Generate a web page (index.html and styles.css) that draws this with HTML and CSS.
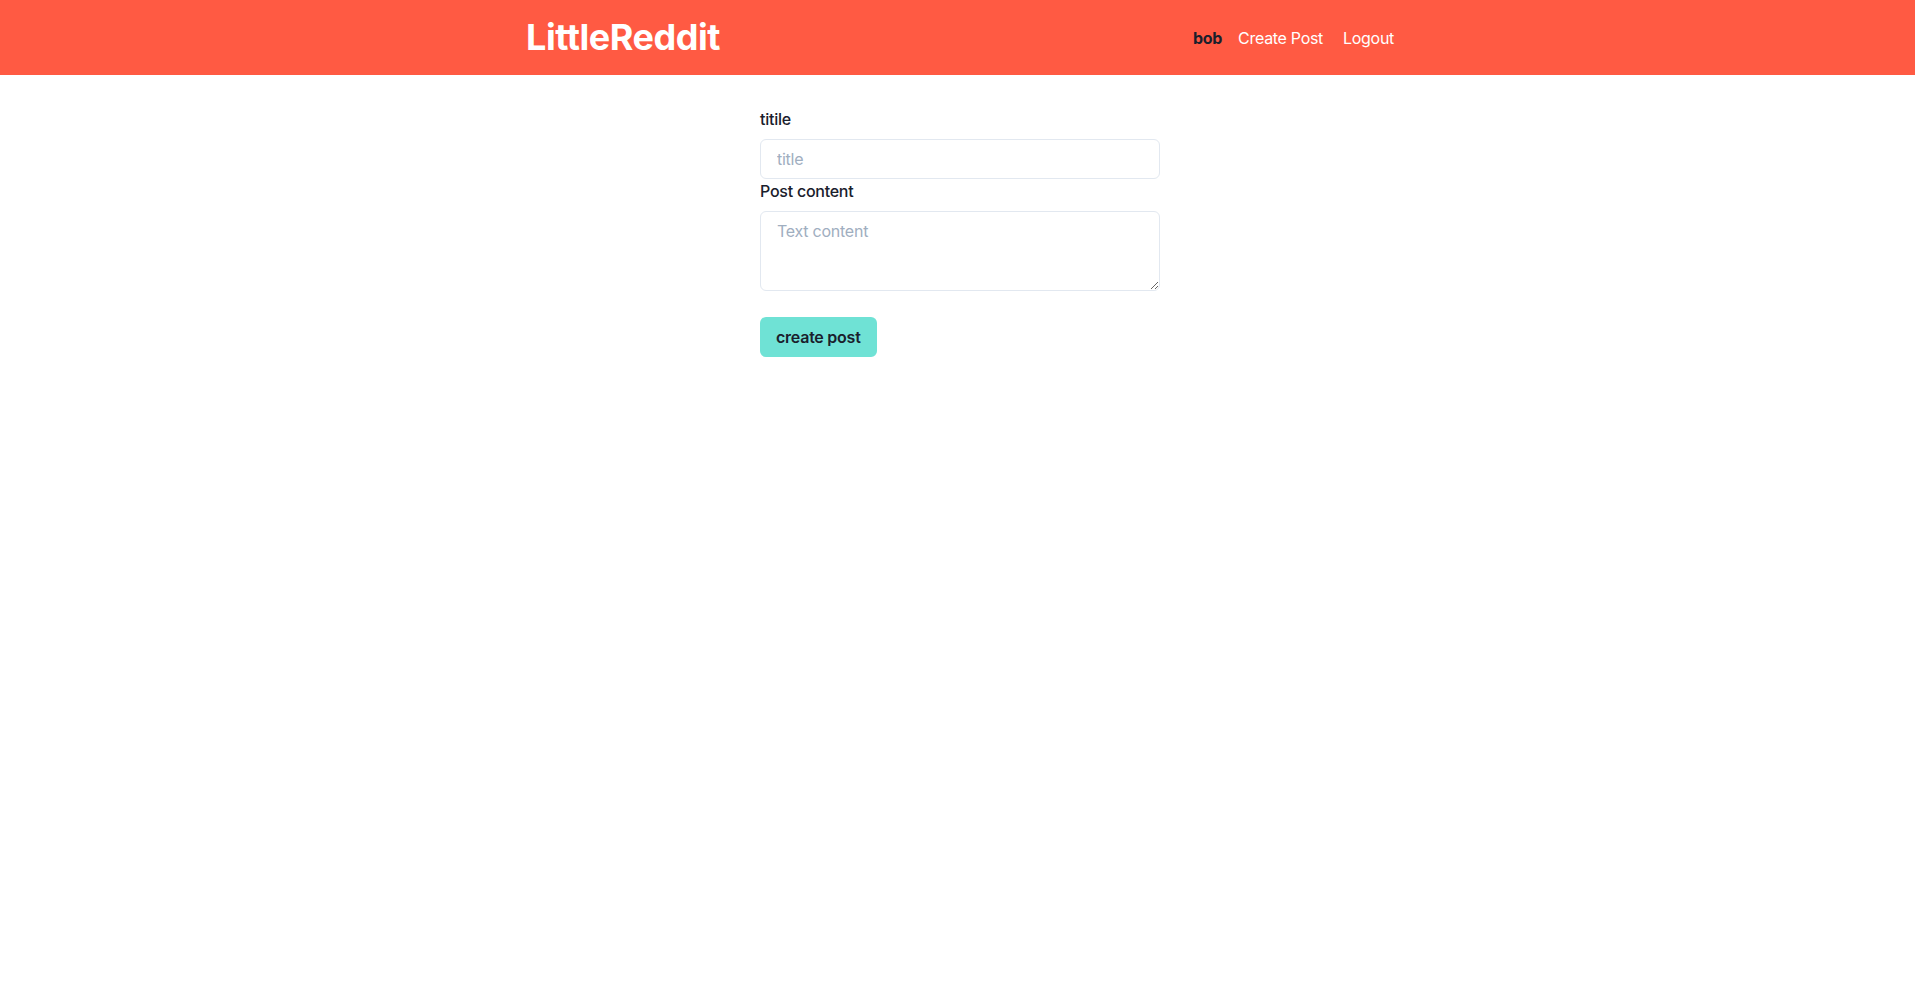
FILE: index.html
```html
<!DOCTYPE html>
<html lang="en">
<head>
<meta charset="utf-8">
<title>LittleReddit</title>
<link rel="stylesheet" href="styles.css">
</head>
<body>
<header class="navbar">
  <div class="navbar-inner">
    <a class="brand" href="#">LittleReddit</a>
    <nav class="nav">
      <span class="nav-user">bob</span>
      <a class="nav-link" href="#">Create Post</a>
      <button class="nav-logout" type="button">Logout</button>
    </nav>
  </div>
</header>
<main class="page">
  <form class="wrapper">
    <div class="field">
      <label class="label" for="title">titile</label>
      <input class="input" id="title" type="text" placeholder="title">
    </div>
    <div class="field">
      <label class="label" for="text">Post content</label>
      <textarea class="textarea" id="text" placeholder="Text content"></textarea>
    </div>
    <button class="submit" type="button">create post</button>
  </form>
</main>
</body>
</html>
```

FILE: styles.css
```css
* { box-sizing: border-box; }
html, body { margin: 0; padding: 0; }
body {
  font-family: Inter, "Noto Sans", sans-serif;
  color: #1a202c;
  background: #fff;
  font-size: 16px;
  line-height: 1.5;
  letter-spacing: -0.25px;
}
.navbar {
  background: #ff5a43;
  height: 75px;
  padding: 16px 0 0 5px;
}
.navbar-inner {
  width: 868px;
  margin: 0 auto;
  display: flex;
  align-items: center;
}
.brand {
  font-size: 36px;
  font-weight: 700;
  line-height: 1.2;
  letter-spacing: -0.45px;
  color: #fff;
  text-decoration: none;
}
.nav {
  margin-left: auto;
  display: flex;
  align-items: center;
}
.nav-user {
  font-weight: 700;
  color: #1a202c;
  margin-right: 16px;
}
.nav-link {
  color: #fff;
  text-decoration: none;
  margin-right: 20px;
  letter-spacing: -0.3px;
}
.nav-logout {
  background: none;
  border: 0;
  padding: 0;
  font: inherit;
  letter-spacing: -0.3px;
  color: #fff;
  cursor: pointer;
}
.page {
  padding-left: 5px;
}
.wrapper {
  width: 400px;
  margin: 32px auto 0;
}
.field { display: flex; flex-direction: column; }
.label {
  font-size: 16px;
  font-weight: 500;
  line-height: 24px;
  margin-bottom: 8px;
}
.input, .textarea {
  width: 100%;
  border: 1px solid #e2e8f0;
  border-radius: 6px;
  padding: 0 16px;
  font: inherit;
  font-size: 16px;
  letter-spacing: -0.25px;
  color: #1a202c;
  background: #fff;
  outline: none;
}
.input { height: 40px; }
.textarea {
  min-height: 80px;
  height: 80px;
  padding: 8px 16px;
  line-height: 1.375;
  resize: vertical;
  display: block;
}
.input::placeholder, .textarea::placeholder { color: #a0aec0; }
.submit {
  margin-top: 26px;
  height: 40px;
  padding: 0 16px;
  border: 0;
  border-radius: 6px;
  background: #6fe2d5;
  color: #1a202c;
  font: inherit;
  font-weight: 600;
  font-size: 16px;
  letter-spacing: -0.25px;
  cursor: pointer;
}
```
